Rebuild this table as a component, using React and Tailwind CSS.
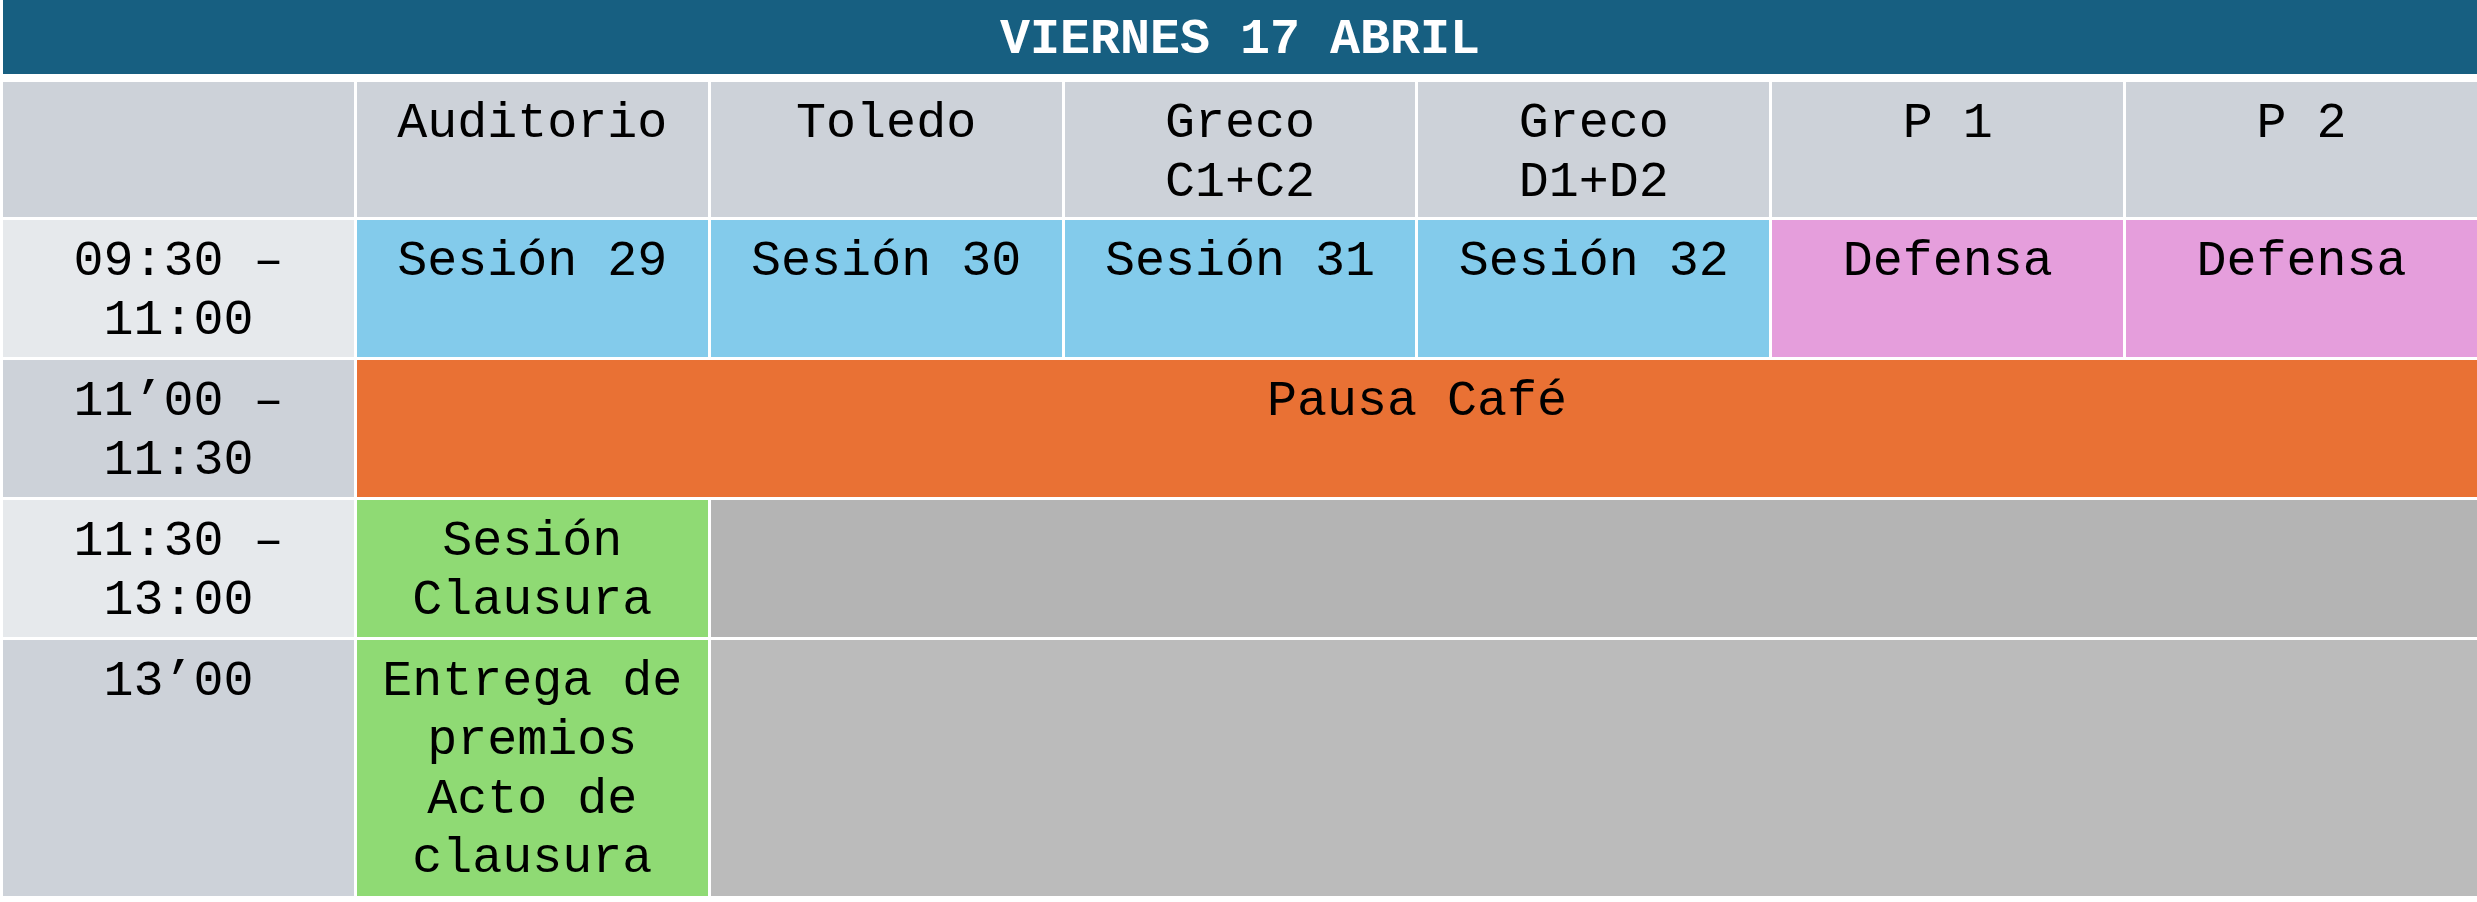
import React from "react";

const mono = { fontFamily: '"Liberation Mono", "Courier New", monospace' };

function Cell({ className = "", children }) {
  return (
    <div className={`pt-[12px] text-center text-[50px] leading-[59px] text-black ${className}`}>
      {children}
    </div>
  );
}

export default function App() {
  return (
    <div className="w-[2477px] h-[902px] bg-white pl-[3px]" style={mono}>
      <div className="h-[74px] bg-[#175f81] flex items-center justify-center pt-[6px]">
        <span className="text-white font-bold text-[50px] leading-none">VIERNES 17 ABRIL</span>
      </div>
      <div className="mt-[8px] grid grid-cols-7 grid-rows-[135px_137px_137px_137px_256px] gap-[3px]">
        {/* header */}
        <Cell className="bg-[#cdd2d9]"></Cell>
        <Cell className="bg-[#cdd2d9]">Auditorio</Cell>
        <Cell className="bg-[#cdd2d9]">Toledo</Cell>
        <Cell className="bg-[#cdd2d9]">Greco<br />C1+C2</Cell>
        <Cell className="bg-[#cdd2d9]">Greco<br />D1+D2</Cell>
        <Cell className="bg-[#cdd2d9]">P 1</Cell>
        <Cell className="bg-[#cdd2d9]">P 2</Cell>

        {/* row 1 */}
        <Cell className="bg-[#e6e9ec]">09:30 –<br />11:00</Cell>
        <Cell className="bg-[#83cbeb]">Sesión 29</Cell>
        <Cell className="bg-[#83cbeb]">Sesión 30</Cell>
        <Cell className="bg-[#83cbeb]">Sesión 31</Cell>
        <Cell className="bg-[#83cbeb]">Sesión 32</Cell>
        <Cell className="bg-[#e59edc]">Defensa</Cell>
        <Cell className="bg-[#e59edc]">Defensa</Cell>

        {/* row 2 */}
        <Cell className="bg-[#cdd2d9]">11’00 –<br />11:30</Cell>
        <Cell className="col-span-6 bg-[#e97134]">Pausa Café</Cell>

        {/* row 3 */}
        <Cell className="bg-[#e6e9ec]">11:30 –<br />13:00</Cell>
        <Cell className="bg-[#8fda74]">Sesión<br />Clausura</Cell>
        <div className="col-span-5 bg-[#b4b4b4]"></div>

        {/* row 4 */}
        <Cell className="bg-[#cdd2d9]">13’00</Cell>
        <Cell className="bg-[#8fda74]">Entrega de<br />premios<br />Acto de<br />clausura</Cell>
        <div className="col-span-5 bg-[#bbbbbb]"></div>
      </div>
    </div>
  );
}
